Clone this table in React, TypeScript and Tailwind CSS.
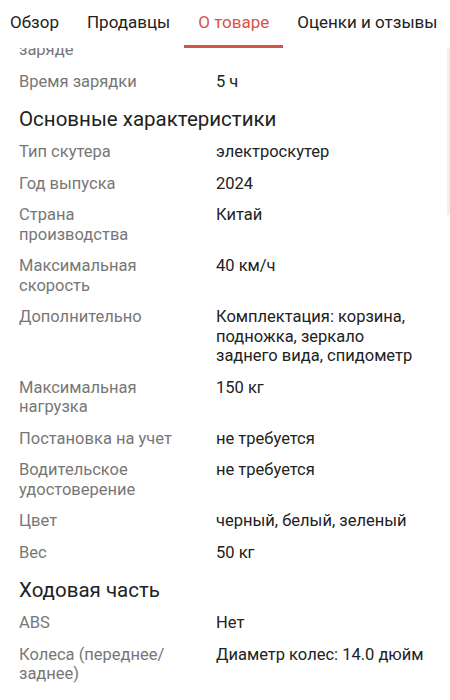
import React from 'react';

type Row = { label: string; value: string };

const tabs = ['Обзор', 'Продавцы', 'О товаре', 'Оценки и отзывы'];

const charging: Row[] = [{ label: 'Время зарядки', value: '5 ч' }];

const mainSpecs: Row[] = [
  { label: 'Тип скутера', value: 'электроскутер' },
  { label: 'Год выпуска', value: '2024' },
  { label: 'Страна производства', value: 'Китай' },
  { label: 'Максимальная скорость', value: '40 км/ч' },
  { label: 'Дополнительно', value: 'Комплектация: корзина, подножка, зеркало заднего вида, спидометр' },
  { label: 'Максимальная нагрузка', value: '150 кг' },
  { label: 'Постановка на учет', value: 'не требуется' },
  { label: 'Водительское удостоверение', value: 'не требуется' },
  { label: 'Цвет', value: 'черный, белый, зеленый' },
  { label: 'Вес', value: '50 кг' },
];

const chassis: Row[] = [
  { label: 'ABS', value: 'Нет' },
  { label: 'Колеса (переднее/ заднее)', value: 'Диаметр колес: 14.0 дюйм' },
];

function SpecRow({ row }: { row: Row }) {
  return (
    <div className="flex py-[6px] text-[16.5px] leading-[19.5px]">
      <div className="w-[197px] shrink-0 pr-[35px] text-[#777777]">{row.label}</div>
      <div className="flex-1 pr-[22px] text-[#222222]">{row.value}</div>
    </div>
  );
}

function Heading({ children }: { children: React.ReactNode }) {
  return (
    <div className="mt-[8px] mb-[3px] text-[20.5px] leading-[28px] text-[#222222]">{children}</div>
  );
}

export default function App() {
  const active = 2;
  return (
    <div
      className="relative w-[450px] h-[700px] overflow-hidden bg-white"
      style={{ fontFamily: 'Roboto, "Noto Sans", sans-serif' }}
    >
      {/* Tabs */}
      <div className="relative z-10 h-[48px] bg-white flex ml-[-4px] whitespace-nowrap">
        {tabs.map((t, i) => (
          <div key={t} className="relative px-[14px] pt-[10px] text-[17px] leading-[24px]">
            <span className={i === active ? 'text-[#d6544a]' : 'text-[#222222]'}>{t}</span>
            {i === active && (
              <div className="absolute left-0 right-0 bottom-0 h-[3px] bg-[#d6544a]" />
            )}
          </div>
        ))}
      </div>

      {/* Scrolled content */}
      <div className="h-[652px] overflow-hidden pl-[19px]">
        <div className="mt-[-13.75px]">
          <div className="py-[6px] text-[16.5px] leading-[19.5px] text-[#777777]">заряде</div>
          {charging.map((r) => (
            <SpecRow key={r.label} row={r} />
          ))}
          <Heading>Основные характеристики</Heading>
          {mainSpecs.map((r) => (
            <SpecRow key={r.label} row={r} />
          ))}
          <Heading>Ходовая часть</Heading>
          {chassis.map((r) => (
            <SpecRow key={r.label} row={r} />
          ))}
        </div>
      </div>

      {/* faint scrollbar */}
      <div className="absolute right-0 top-[35px] w-[3px] h-[180px] bg-[#f3eeee]" />
    </div>
  );
}
